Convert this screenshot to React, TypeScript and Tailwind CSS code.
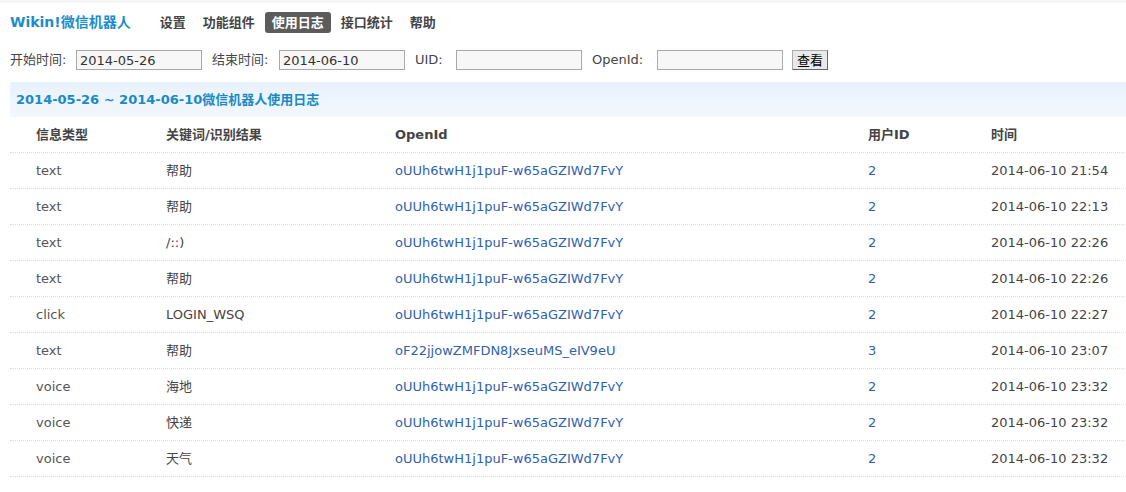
const font = "font-['DejaVu_Sans','Noto_Sans_CJK_SC',sans-serif]";

const nav = ["设置", "功能组件", "使用日志", "接口统计", "帮助"];

const rows = [
  ["text", "帮助", "oUUh6twH1j1puF-w65aGZIWd7FvY", "2", "2014-06-10 21:54"],
  ["text", "帮助", "oUUh6twH1j1puF-w65aGZIWd7FvY", "2", "2014-06-10 22:13"],
  ["text", "/::)", "oUUh6twH1j1puF-w65aGZIWd7FvY", "2", "2014-06-10 22:26"],
  ["text", "帮助", "oUUh6twH1j1puF-w65aGZIWd7FvY", "2", "2014-06-10 22:26"],
  ["click", "LOGIN_WSQ", "oUUh6twH1j1puF-w65aGZIWd7FvY", "2", "2014-06-10 22:27"],
  ["text", "帮助", "oF22jjowZMFDN8JxseuMS_eIV9eU", "3", "2014-06-10 23:07"],
  ["voice", "海地", "oUUh6twH1j1puF-w65aGZIWd7FvY", "2", "2014-06-10 23:32"],
  ["voice", "快递", "oUUh6twH1j1puF-w65aGZIWd7FvY", "2", "2014-06-10 23:32"],
  ["voice", "天气", "oUUh6twH1j1puF-w65aGZIWd7FvY", "2", "2014-06-10 23:32"],
];

const cols = "grid grid-cols-[130px_229px_473px_123px_1fr]";

function Field({ label, value, width }: { label: string; value?: string; width: string }) {
  return (
    <div className="flex shrink-0 items-center">
      <span className={`${width} shrink-0 whitespace-nowrap`}>{label}</span>
      <input
        readOnly
        value={value ?? ""}
        className="h-[20px] w-[126px] border border-[#a9a9a9] bg-[#f7f7f7] px-[3px] text-[13px] text-[#333] outline-none"
      />
    </div>
  );
}

export default function App() {
  return (
    <div className={`${font} min-h-[492px] bg-white text-[13px] text-[#444]`}>
      <div className="h-[3px] bg-[#f6f6f6]" />
      <div className="flex h-[39px] items-center pl-[10px]">
        <span className="text-[14px] font-bold text-[#1b8dcc]">Wikin!微信机器人</span>
        <nav className="ml-[22px] flex items-center gap-[3px]">
          {nav.map((n) => (
            <span
              key={n}
              className={
                n === "使用日志"
                  ? "rounded-[3px] bg-[#5c5c5c] px-[7px] py-[1px] font-bold text-white"
                  : "px-[7px] py-[1px] font-bold text-[#444]"
              }
            >
              {n}
            </span>
          ))}
        </nav>
      </div>

      <div className="mb-[4px] flex h-[36px] items-center pl-[10px] text-[#444]">
        <Field label="开始时间:" value="2014-05-26" width="w-[66px]" />
        <div className="w-[10px] shrink-0" />
        <Field label="结束时间:" value="2014-06-10" width="w-[67px]" />
        <div className="w-[10px] shrink-0" />
        <Field label="UID:" width="w-[41px]" />
        <div className="w-[10px] shrink-0" />
        <Field label="OpenId:" width="w-[65px]" />
        <button className="ml-[9px] h-[20px] shrink-0 border border-[#aaa] border-b-[#666] border-r-[#666] bg-[#e9e9e9] px-[4px] text-[13px] leading-none text-black">
          查看
        </button>
      </div>

      <div className="ml-[10px] flex h-[35px] items-center bg-gradient-to-b from-[#e8f2fc] to-[#f4f8fd] pl-[6px] text-[13px] font-bold text-[#1a8ac6]">
        2014-05-26 ~ 2014-06-10微信机器人使用日志
      </div>

      <div className="ml-[10px] mr-[2px]">
        <div className={`${cols} h-[36px] items-center border-b border-dotted border-[#c6def2] font-bold text-[#444]`}>
          <span className="pl-[26px]">信息类型</span>
          <span className="pl-[26px]">关键词/识别结果</span>
          <span className="pl-[26px]">OpenId</span>
          <span className="pl-[26px]">用户ID</span>
          <span className="pl-[26px]">时间</span>
        </div>
        {rows.map((r, i) => (
          <div key={i} className={`${cols} h-[36px] items-center border-b border-dotted border-[#c6def2]`}>
            <span className="pl-[26px] text-[#555]">{r[0]}</span>
            <span className="pl-[26px] text-[#444]">{r[1]}</span>
            <span className="pl-[26px] text-[#2f62ad]">{r[2]}</span>
            <span className="pl-[26px] text-[#2f62ad]">{r[3]}</span>
            <span className="pl-[26px] text-[#444]">{r[4]}</span>
          </div>
        ))}
      </div>
    </div>
  );
}
